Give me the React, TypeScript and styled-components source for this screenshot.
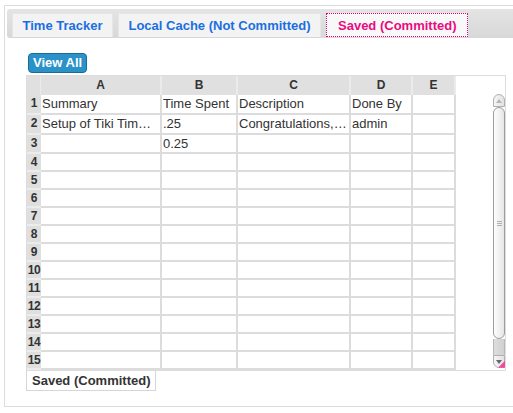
import React from "react";
import styled, { createGlobalStyle } from "styled-components";

const GlobalStyle = createGlobalStyle`
  * { box-sizing: border-box; }
  html, body { margin: 0; padding: 0; background: #fff; overflow: hidden; }
  body { font-family: "Liberation Sans", Arial, sans-serif; color: #333; }
`;

const Panel = styled.div`
  margin: 5px 0 0 4px;
  width: 540px;
  height: 402px;
  border: 1px solid #dcdcdc;
  padding: 3px 0 0 2px;
`;

const TabBar = styled.div`
  display: flex;
  align-items: flex-end;
  gap: 5px;
  height: 29px;
  padding: 0 0 1px 5px;
  background: linear-gradient(#e4e4e4, #d8d8d8);
  border-radius: 3px 0 0 3px;
`;

const Tab = styled.div<{ $active?: boolean }>`
  height: 24px;
  padding: 0 ${(p) => (p.$active ? "11px" : "9.5px")};
  line-height: 24px;
  font-size: 13px;
  font-weight: bold;
  white-space: nowrap;
  color: ${(p) => (p.$active ? "#ea0b80" : "#1a6fe0")};
  background: ${(p) => (p.$active ? "#f8f8f8" : "#f3f3f3")};
  border: 1px ${(p) => (p.$active ? "dotted #e4007c" : "solid #e6e6e6")};
  border-bottom: ${(p) => (p.$active ? "1px dotted #e4007c" : "none")};
  overflow: hidden;
`;

const Content = styled.div`
  padding: 15px 0 0 19px;
`;

const ViewAll = styled.button`
  display: block;
  margin: 0 0 2px 2px;
  height: 20px;
  padding: 0 4px;
  font-family: inherit;
  font-size: 13px;
  font-weight: bold;
  line-height: 18px;
  color: #fff;
  background: #2a92c9;
  border: 1px solid #1d6a96;
  border-radius: 4px;
`;

const Frame = styled.div`
  display: flex;
  width: 480px;
  height: 296px;
  border: 1px solid #dddddd;
`;

const Sheet = styled.div`
  display: grid;
  grid-template-columns: 14px 121px 76px 113px 62px 43px;
  grid-template-rows: 19px 20px 20px 19px repeat(12, 18px);
  align-self: flex-start;
`;

const HeadCell = styled.div<{ $corner?: boolean }>`
  background: #e0e0e0;
  border-right: ${(p) => (p.$corner ? "1px" : "2px")} solid #ebebeb;
  font-size: 12px;
  font-weight: bold;
  text-align: center;
  line-height: 19px;
  color: #333;
`;

const RowNum = styled.div`
  background: #dfdfdf;
  border-bottom: 2px solid #ececec;
  font-size: 12px;
  font-weight: bold;
  text-align: center;
  line-height: 17px;
  letter-spacing: -0.4px;
  color: #333;
`;

const Cell = styled.div`
  background: #fff;
  border-right: 2px solid #dcdcdc;
  border-bottom: 2px solid #dcdcdc;
  padding: 0 2px 0 1px;
  font-size: 13px;
  line-height: 17px;
  white-space: nowrap;
  overflow: hidden;
  text-overflow: ellipsis;
  color: #333;
`;

const Scroll = styled.div`
  display: flex;
  flex-direction: column;
  width: 12px;
  height: 274px;
  margin: 18px 0 0 auto;
  position: relative;
`;

const ScrollButton = styled.div<{ $down?: boolean }>`
  flex: 0 0 13px;
  display: flex;
  align-items: center;
  justify-content: center;
  border: 1px solid #b0b0b0;
  border-radius: ${(p) => (p.$down ? "0 0 6px 6px" : "6px 6px 0 0")};
  background: linear-gradient(to right, #f6f6f6, #e2e2e2);
`;

const Thumb = styled.div`
  flex: 0 0 232px;
  display: flex;
  align-items: center;
  justify-content: center;
  border: 1px solid #9c9c9c;
  border-radius: 6px;
  background: linear-gradient(to right, #fdfdfd, #e6e6e6);
`;

const TrackRest = styled.div`
  flex: 1;
  background: linear-gradient(to right, #dedede, #d0d0d0);
  border-left: 1px solid #b8b8b8;
  border-right: 1px solid #b8b8b8;
`;

// pink resize corner over the bottom scroll button
const Grip = styled.svg`
  position: absolute;
  right: 0;
  bottom: 0;
`;

const SheetTab = styled.div`
  width: 130px;
  height: 20px;
  padding-left: 5px;
  border: 1px solid #d6d6d6;
  border-top: none;
  font-size: 13px;
  font-weight: bold;
  line-height: 19px;
  color: #333;
  background: #fff;
`;

const cols = ["A", "B", "C", "D", "E"];

const rows: string[][] = [
  ["Summary", "Time Spent", "Description", "Done By", ""],
  ["Setup of Tiki Timesheet", ".25", "Congratulations, you are all set up", "admin", ""],
  ["", "0.25", "", "", ""],
];

const App = () => {
  const allRows = Array.from({ length: 15 }, (_, i) => rows[i] || ["", "", "", "", ""]);

  return (
    <>
      <GlobalStyle />
      <Panel>
        <TabBar>
          <Tab>Time Tracker</Tab>
          <Tab>Local Cache (Not Committed)</Tab>
          <Tab $active>Saved (Committed)</Tab>
        </TabBar>

        <Content>
          <ViewAll>View All</ViewAll>

          <Frame>
            <Sheet>
              <HeadCell $corner />
              {cols.map((c) => (
                <HeadCell key={c}>{c}</HeadCell>
              ))}

              {allRows.map((r, i) => (
                <React.Fragment key={i}>
                  <RowNum>{i + 1}</RowNum>
                  {r.map((v, j) => (
                    <Cell key={j}>{v}</Cell>
                  ))}
                </React.Fragment>
              ))}
            </Sheet>

            <Scroll>
              <ScrollButton>
                <svg width="6" height="4" viewBox="0 0 6 4">
                  <path d="M0 4 L3 0 L6 4 Z" fill="#b5b5b5" />
                </svg>
              </ScrollButton>
              <Thumb>
                <svg width="5" height="5" viewBox="0 0 5 5">
                  <path d="M0 0.5 H5 M0 2.5 H5 M0 4.5 H5" stroke="#b0b0b0" strokeWidth="1" />
                </svg>
              </Thumb>
              <TrackRest />
              <ScrollButton $down>
                <svg width="6" height="4" viewBox="0 0 6 4">
                  <path d="M0 0 L6 0 L3 4 Z" fill="#666" />
                </svg>
              </ScrollButton>
              <Grip width="7" height="7" viewBox="0 0 7 7">
                <path d="M7 0 L7 7 L0 7 Z" fill="#f06cb0" />
                <path d="M6 1 L7 1 M5 2 L7 2 M4 3 L7 3 M3 4 L7 4 M2 5 L7 5 M1 6 L7 6" stroke="#e4007c" strokeWidth="0.6" strokeDasharray="1 1" />
              </Grip>
            </Scroll>
          </Frame>

          <SheetTab>Saved (Committed)</SheetTab>
        </Content>
      </Panel>
    </>
  );
};

export default App;
